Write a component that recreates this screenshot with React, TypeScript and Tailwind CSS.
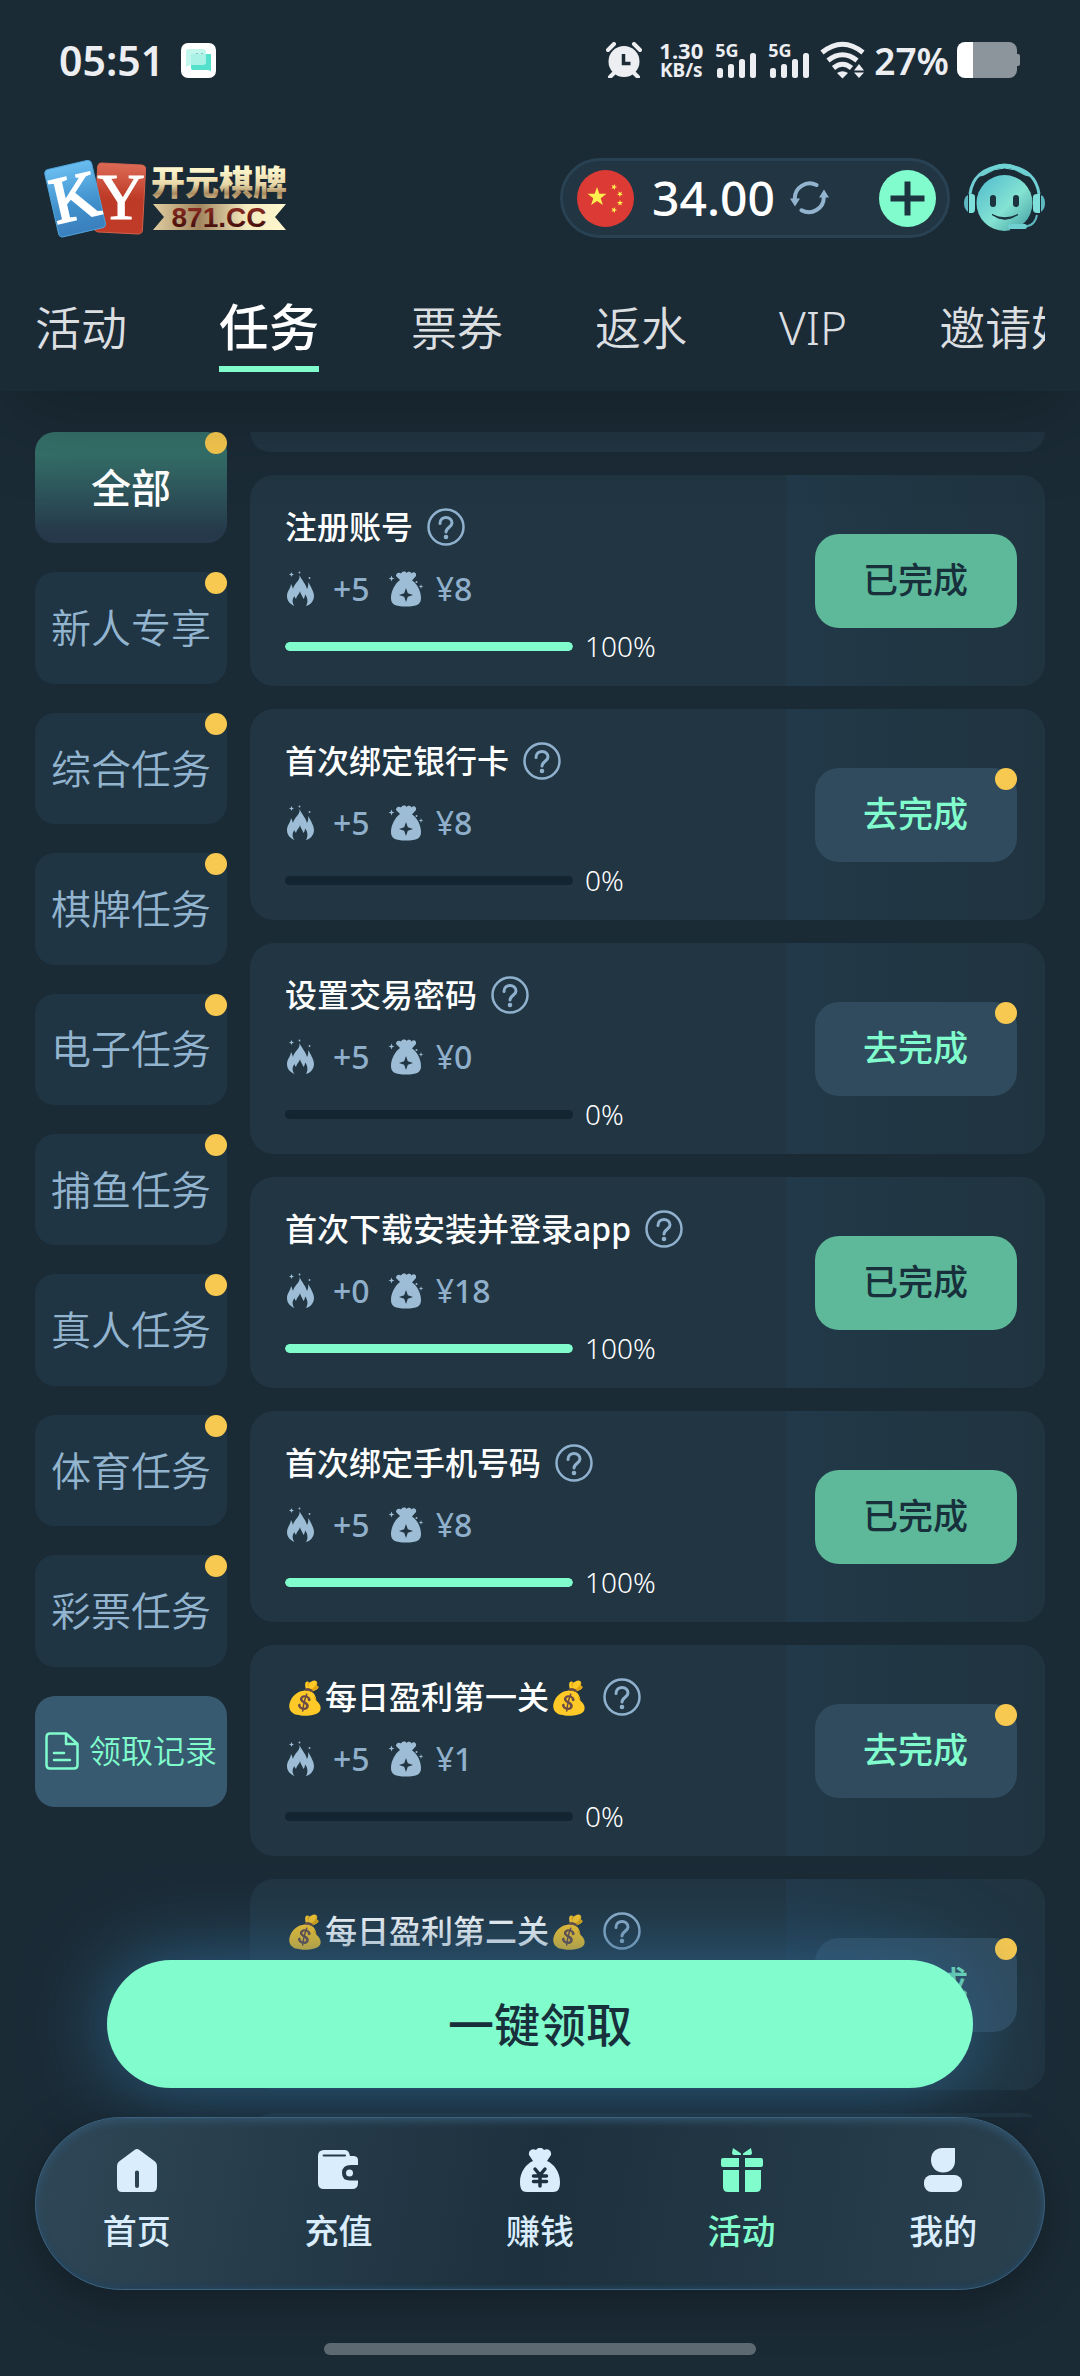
import { useState } from 'react';
import clsx from 'clsx';

interface Task {
  id: number;
  title: string;
  heat: number;
  reward: number;
  progress: number;
}

const tabs = ['活动', '任务', '票券', '返水', 'VIP', '邀请好友'];

const categories = [
  '全部',
  '新人专享',
  '综合任务',
  '棋牌任务',
  '电子任务',
  '捕鱼任务',
  '真人任务',
  '体育任务',
  '彩票任务',
];

const tasks: Task[] = [
  { id: 1, title: '注册账号', heat: 5, reward: 8, progress: 100 },
  { id: 2, title: '首次绑定银行卡', heat: 5, reward: 8, progress: 0 },
  { id: 3, title: '设置交易密码', heat: 5, reward: 0, progress: 0 },
  { id: 4, title: '首次下载安装并登录app', heat: 0, reward: 18, progress: 100 },
  { id: 5, title: '首次绑定手机号码', heat: 5, reward: 8, progress: 100 },
  { id: 6, title: '💰每日盈利第一关💰', heat: 5, reward: 1, progress: 0 },
  { id: 7, title: '💰每日盈利第二关💰', heat: 5, reward: 2, progress: 0 },
];

function StatusBar() {
  return (
    <div className="flex h-[120px] items-center justify-between pl-[59px] pr-[60px] text-[#eceef1]">
      <div className="flex items-center gap-[17px]">
        <span className="text-[41px] font-semibold leading-none">05:51</span>
        <svg width="35" height="35" viewBox="0 0 35 35">
          <rect width="35" height="35" rx="7" fill="#fff" />
          <path d="M10 11h20v17l-3-1H12a2 2 0 0 1-2-2z" fill="#55e0cb" />
          <path d="M7 6h15a3 3 0 0 1 3 3v10a3 3 0 0 1-3 3H9l-4 2V8a2 2 0 0 1 2-2z" fill="#b9f5ea" opacity=".85" />
          <path d="M16 10v1M21 10v1" stroke="#2d9c8d" />
        </svg>
      </div>
      <div className="flex items-center">
        <svg width="36" height="36" viewBox="0 0 36 36" fill="currentColor">
          <path d="M2 8l6-6M34 8l-6-6M8 31l-4 4M28 31l4 4" stroke="currentColor" strokeWidth="4" strokeLinecap="round" />
          <circle cx="18" cy="19.500" r="15.500" />
          <path d="M17.500 12v9.500h7" fill="none" stroke="#1b2b36" strokeWidth="3.500" />
        </svg>
        <div className="ml-4 flex w-[46px] flex-col items-center font-bold">
          <span className="text-[22px] leading-5">1.30</span>
          <span className="text-[19px] leading-5">KB/s</span>
        </div>
        <SignalIcon />
        <SignalIcon />
        <svg className="ml-[10px]" width="46" height="38" viewBox="0 0 46 38" fill="none">
          <g stroke="currentColor" strokeWidth="5">
            <path d="M2 11.500Q22.500-5 43 11.500" />
            <path d="M8 19.500Q22.500 8 37 19.500" />
            <path d="M13.500 27Q22.500 19.500 31.500 27" />
          </g>
          <path d="M17 32Q22.500 28.500 28 32L22.500 37.500z" fill="currentColor" />
          <path d="M39 23l5 6.500H34zM39 37l5-5.500H34z" fill="currentColor" />
        </svg>
        <span className="ml-2 text-[37px] font-semibold leading-none">27%</span>
        <svg className="ml-2" width="63" height="36" viewBox="0 0 63 36">
          <path d="M8 0h44a8 8 0 0 1 8 8v4h1a2 2 0 0 1 2 2v8a2 2 0 0 1-2 2h-1v4a8 8 0 0 1-8 8H8z" fill="#8d959c" />
          <path d="M8 0h8v36H8a8 8 0 0 1-8-8V8a8 8 0 0 1 8-8z" fill="#fff" />
        </svg>
      </div>
    </div>
  );
}

function SignalIcon() {
  return (
    <div className="relative ml-[11px] h-[36px] w-[42px]">
      <span className="absolute left-0 top-0 text-[18px] font-bold leading-4">5G</span>
      <svg width="42" height="36" viewBox="0 0 42 36" fill="currentColor">
        <rect x="2" y="26" width="6" height="10" rx="2.500" />
        <rect x="13" y="22" width="6" height="14" rx="2.500" />
        <rect x="24" y="17" width="6" height="19" rx="2.500" />
        <rect x="35" y="11" width="6" height="25" rx="2.500" />
      </svg>
    </div>
  );
}

function Logo() {
  return (
    <svg width="246" height="80" viewBox="0 0 246 80" role="img" aria-label="开元棋牌 871.CC">
      <defs>
        <linearGradient id="blueCard" x1="0" y1="0" x2="0" y2="1">
          <stop offset="0" stopColor="#69bdf0" />
          <stop offset=".6" stopColor="#4090cc" />
          <stop offset="1" stopColor="#3a7fbd" />
        </linearGradient>
        <linearGradient id="redCard" x1="0" y1="0" x2="0" y2="1">
          <stop offset="0" stopColor="#dc6a55" />
          <stop offset=".5" stopColor="#bd3a26" />
          <stop offset="1" stopColor="#c03c28" />
        </linearGradient>
        <linearGradient id="goldText" x1="0" y1="0" x2="0" y2="1">
          <stop offset=".2" stopColor="#fff8cf" />
          <stop offset=".55" stopColor="#e8d8a8" />
          <stop offset=".75" stopColor="#a98a5f" />
          <stop offset="1" stopColor="#f5e8b8" />
        </linearGradient>
        <linearGradient id="ribbon">
          <stop offset="0" stopColor="#e0cda0" />
          <stop offset=".35" stopColor="#a1855f" />
          <stop offset=".7" stopColor="#f5eabf" />
          <stop offset="1" stopColor="#fff8cf" />
        </linearGradient>
        <linearGradient id="darkRed" x1="0" y1="0" x2="0" y2="1">
          <stop offset=".2" stopColor="#8a2a20" />
          <stop offset=".9" stopColor="#3c0a08" />
        </linearGradient>
      </defs>
      <g transform="rotate(3 76 41)">
        <rect x="52" y="6" width="48" height="69" rx="4" fill="url(#redCard)" stroke="#d2604c" />
      </g>
      <text x="77" y="61" textAnchor="middle" fontSize="66" fill="#fff" stroke="#fff" className="font-['Liberation_Serif']">Y</text>
      <g transform="rotate(-13 32 40)">
        <rect x="7" y="6" width="48" height="69" rx="4" fill="url(#blueCard)" stroke="#4fa3da" />
        <text x="31" y="61" textAnchor="middle" fontSize="66" fill="#fff" stroke="#fff" strokeWidth="2" className="font-['Liberation_Serif']">K</text>
      </g>
      <text x="107" y="37" fontSize="34" fontWeight="900" fill="url(#goldText)">开元棋牌</text>
      <path d="M109 46H242L231 59L242 72H109L120 59z" fill="url(#ribbon)" />
      <text x="175" y="69" textAnchor="middle" fontSize="28" fontWeight="700" fill="url(#darkRed)" className="font-['Liberation_Sans']">871.CC</text>
    </svg>
  );
}

function FlagIcon() {
  const star = 'M0-10L2.300-3.200H9.500L3.700 1.200L5.900 8.100L0 3.900L-5.900 8.100L-3.700 1.200L-9.500-3.200H-2.300z';
  return (
    <svg width="57" height="57" viewBox="0 0 57 57" fill="#fdf04e">
      <circle cx="28.500" cy="28.500" r="28.500" fill="#dc3a35" />
      <path d={star} transform="translate(20 27)" />
      <path d={star} transform="translate(37 17) rotate(20) scale(.32)" />
      <path d={star} transform="translate(43 24) rotate(40) scale(.32)" />
      <path d={star} transform="translate(43 33) scale(.32)" />
      <path d={star} transform="translate(37 40) rotate(20) scale(.32)" />
    </svg>
  );
}

function RefreshIcon() {
  return (
    <svg width="40" height="36" viewBox="0 0 40 36" fill="#93b4cf">
      <g fill="none" stroke="#93b4cf" strokeWidth="4" strokeLinecap="round">
        <path d="M27.500 5A15 15 0 0 0 5.800 19" />
        <path d="M12.500 30.300A15 15 0 0 0 34.800 17" />
      </g>
      <path d="M1 18.500H11L6 26.500zM30 17.500H40L35 9.500z" />
    </svg>
  );
}

function SupportIcon() {
  return (
    <svg width="82" height="70" viewBox="0 0 82 70">
      <defs>
        <linearGradient id="face" x1="0" y1="0" x2="1" y2="1">
          <stop offset="0" stopColor="#4fb9cf" />
          <stop offset=".55" stopColor="#84e3d2" />
          <stop offset="1" stopColor="#3f9aa0" />
        </linearGradient>
      </defs>
      <circle cx="40.500" cy="40" r="28" fill="url(#face)" />
      <path d="M6 31C8 16 18 4 40.500 2.500C63 4 73 16 75 31" fill="none" stroke="#6fcfd4" strokeWidth="3" />
      <path d="M16 13Q40.500-11 65 13L61 12Q40.500-2 20 12z" fill="#70d3d3" stroke="#70d3d3" />
      <path d="M5 31H8Q11 31 11 34V46Q11 50 8 50H5z" fill="#7fdfdb" />
      <path d="M4 32Q0 34 0 40T4 49z" fill="#5fb9c0" />
      <path d="M76 31H73Q69 31 69 34V46Q69 50 73 50H76z" fill="#7fdfdb" />
      <path d="M77 32Q81 34 81 40T77 49z" fill="#5fb9c0" />
      <rect x="26" y="32" width="6" height="12" rx="3" fill="#1b3440" />
      <rect x="49" y="32" width="6" height="12" rx="3" fill="#1b3440" />
      <path d="M28 51.500Q40.500 61 54 51.500Q40.500 58 28 51.500z" fill="#1b3440" stroke="#1b3440" />
      <path d="M73 52Q71 63 62 64H46" fill="none" stroke="#1b2b36" strokeWidth="6" />
      <path d="M73 52Q71 62.500 62 63.500" fill="none" stroke="#5fb9c0" strokeWidth="2" />
      <rect x="44" y="61" width="19" height="5" rx="2.500" fill="#6fcfd0" />
    </svg>
  );
}

function TopBar() {
  return (
    <div className="mt-[38px] flex h-20 items-center justify-between pl-[44px] pr-[34px]">
      <Logo />
      <div className="flex items-center gap-[14px]">
        <div className="flex h-20 w-[390px] items-center rounded-full border-[3px] border-[#294253] bg-[#213542] pl-[14px] pr-[11px]">
          <FlagIcon />
          <span className="ml-[18px] text-[48px] font-medium leading-none text-white">34.00</span>
          <button className="ml-[14px]" aria-label="刷新余额">
            <RefreshIcon />
          </button>
          <button className="ml-auto" aria-label="充值">
            <svg width="57" height="57" viewBox="0 0 57 57">
              <circle cx="28.500" cy="28.500" r="28.500" fill="#80fccd" />
              <path d="M28.500 11.500V45.500M11.500 28.500H45.500" stroke="#1b3440" strokeWidth="6" />
            </svg>
          </button>
        </div>
        <button aria-label="客服">
          <SupportIcon />
        </button>
      </div>
    </div>
  );
}

function QuestionIcon() {
  return (
    <svg width="38" height="38" viewBox="0 0 38 38" fill="none" stroke="#8fb1cd">
      <circle cx="19" cy="19" r="17.500" strokeWidth="2.500" />
      <path d="M13 15.500C13 7.500 25 7.500 25 15C25 19 19 19.500 19 24" strokeWidth="3" strokeLinecap="round" />
      <circle cx="19" cy="29" r="2.300" fill="#8fb1cd" stroke="none" />
    </svg>
  );
}

function FlameIcon() {
  return (
    <svg width="30" height="36" viewBox="0 0 30 36" fill="#9dbcd5">
      <path d="M14.500 4C16 8 21 13 22 18C23.500 16 23 13 23.500 11C25 15 29 20 29 25C29 30 25.500 34 21 35C23.500 31 22.500 26 20 23.500C20 25 19.500 27 18.500 28C17 24 15.500 23 15 20C14.500 23 12 24 11 28C10 27 9.500 26 9.500 25C7 28 7 32 9.500 35C5 33 2 30 2 25C2 20 5.500 18 6 13C7 15 7.500 16 8 18C9 12 15.500 10 14.500 4z" />
      <path d="M6.500 1L7.200 2.800L9 3.500L7.200 4.200L6.500 6L5.800 4.200L4 3.500L5.800 2.800z" />
      <circle cx="14.500" cy="1.500" r=".9" />
      <circle cx="24.500" cy="7" r=".9" />
    </svg>
  );
}

function BagIcon() {
  return (
    <svg width="36" height="36" viewBox="0 0 36 36" fill="#9dbcd5">
      <path d="M12 9L8 5C8 1.500 11.500 1 13 2.500C14.500 0 17.500 0 18.500 2C20 0 23 .5 23.500 2.500C25.500 0 29 2 28 5L24 9.500C29 12.500 33 20 33 27C33 33.500 29 35.500 18 35.500C7 35.500 3 33.500 3 27C3 20 7 12.500 12 9z" />
      <path d="M18 17L19.800 22.200L25 24L19.800 25.800L18 31L16.200 25.800L11 24L16.200 22.200z" fill="#213542" />
      <path d="M3.500 4.500L4.300 6.700L6.500 7.500L4.300 8.300L3.500 10.500L2.700 8.300L.5 7.500L2.700 6.700zM33 13L33.600 14.900L35.500 15.500L33.600 16.100L33 18L32.400 16.100L30.500 15.500L32.400 14.900z" />
      <circle cx="28.500" cy="11" r="1" />
    </svg>
  );
}

function Dot() {
  return <span className="absolute right-0 top-0 size-[22px] rounded-full bg-[#f8c950]" />;
}

function TaskCard({ task }: { task: Task }) {
  const done = task.progress === 100;

  return (
    <li className="flex shrink-0 overflow-hidden rounded-3xl bg-[#213542]">
      <div className="flex flex-1 flex-col gap-6 pb-[26px] pl-[35px] pt-[33px]">
        <div className="flex h-[38px] items-center gap-[14px]">
          <h3 className="text-[32px] font-medium leading-none text-white">{task.title}</h3>
          <button aria-label="任务说明">
            <QuestionIcon />
          </button>
        </div>
        <div className="flex h-[38px] items-center text-[32px] font-medium leading-9 text-[#8fafca]">
          <FlameIcon />
          <span className="ml-[18px]">+{task.heat}</span>
          <span className="ml-[18px]">
            <BagIcon />
          </span>
          <span className="ml-3">
            <span className="font-normal">¥</span>
            {task.reward}
          </span>
        </div>
        <div className="flex h-7 items-center gap-3">
          <div
            className="h-[9px] w-[288px] overflow-hidden rounded-full bg-[#122530]"
            role="progressbar"
            aria-valuenow={task.progress}
            aria-label={task.title}
          >
            <div className="h-full rounded-full bg-[#80fccd]" style={{ width: `${task.progress}%` }} />
          </div>
          <span className="text-[28px] font-light leading-none text-white">{task.progress}%</span>
        </div>
      </div>
      <div className="flex w-[259px] items-center justify-center bg-linear-to-r from-[#22394a] via-[#203643] to-[#203440]">
        <button
          className={clsx(
            'relative h-[94px] w-[202px] rounded-3xl text-[35px] font-medium',
            done ? 'bg-[#5db999] text-[#18303c]' : 'bg-[#304b5e] text-[#80fccd]'
          )}
        >
          {done ? '已完成' : '去完成'}
          {!done && <Dot />}
        </button>
      </div>
    </li>
  );
}

const navItems = [
  {
    label: '首页',
    icon: (
      <path d="M19.500 2Q22 0 24.500 2L40 13.500Q42 15 42 18V38Q42 44 37 44H7Q2 44 2 38V18Q2 15 4 13.500zM20 24V38Q20 40 22 40T24 38V24Q24 22.500 22 22.500T20 24z" fillRule="evenodd" />
    ),
  },
  {
    label: '充值',
    icon: (
      <>
        <path d="M8 2H29Q33 2 34 8H38Q42 8.500 42 12V17H35Q26 17 26 25T35 32.500H42V35Q42 41 36 41H8Q2 41 2 35V8Q2 2 8 2zM8 6.500Q6.500 6.500 6.500 7.500T8 8.500H29Q30 8.500 30 7.500T29 6.500z" fillRule="evenodd" />
        <circle cx="33.500" cy="25" r="3.500" />
      </>
    ),
  },
  {
    label: '赚钱',
    icon: (
      <>
        <path d="M15 13L11 7C10 2 15 0 18 2C20-1 24-1 26 2C29 0 34 2 33 7L29 13C36 16 42 24 42 34C42 41 40 44 35 44H9C4 44 2 41 2 34C2 24 8 16 15 13z" />
        <path d="M17 21L22 27L27 21M22 27V38M15.500 28H28.500M15.500 33.500H28.500" fill="none" stroke="#1e313e" strokeWidth="3.500" strokeLinecap="round" />
      </>
    ),
  },
  {
    label: '活动',
    icon: (
      <>
        <path d="M13 0L21 5.500V7H14Q12 7 12 5zM31 0L23 5.500V7H30Q32 7 32 5z" />
        <path d="M3 10H19V19H3Q1 19 1 17V12Q1 10 3 10zM25 10H41Q43 10 43 12V17Q43 19 41 19H25z" />
        <path d="M3 22H19V44H8Q3 44 3 39zM25 22H41V39Q41 44 36 44H25z" />
      </>
    ),
  },
  {
    label: '我的',
    icon: (
      <>
        <path d="M21.500 0H34V13C34 20 29 24.500 22 24.500S10 19 10 12S14 0 21.500 0z" />
        <rect x="3" y="27" width="38" height="17" rx="7.500" />
      </>
    ),
  },
];

function BottomNav() {
  return (
    <nav className="relative z-10 mx-[35px] flex h-[173px] shrink-0 rounded-full border border-[#3c6280] bg-linear-[100deg,#2f4757,#1d303d_50%,#2a4150] shadow-[0_12px_50px_rgba(0,0,0,0.3),inset_0_3px_8px_#34566f,inset_0_-2px_4px_#1f3f57]">
      {navItems.map((item) => {
        const active = item.label === '活动';
        return (
          <a
            key={item.label}
            href="#"
            className={clsx(
              'flex flex-1 flex-col items-center gap-4 pt-[30px] text-[34px] font-medium leading-[46px]',
              active ? 'text-[#80fccd]' : 'text-[#d9edfd]'
            )}
          >
            <svg width="44" height="44" viewBox="0 0 44 44" fill="currentColor">
              {item.icon}
            </svg>
            {item.label}
          </a>
        );
      })}
    </nav>
  );
}

export default function App() {
  const [activeTab, setActiveTab] = useState('任务');
  const [category, setCategory] = useState('全部');

  return (
    <div className="flex h-screen flex-col overflow-hidden bg-[#1b2b36] font-['Noto_Sans','Noto_Sans_CJK_SC',sans-serif]">
      <header className="relative z-10 shrink-0 bg-[#1b2b36] pb-[19px] shadow-[0_30px_80px_rgba(0,0,0,0.2)]">
        <StatusBar />
        <TopBar />
        <div className="mx-[35px] mt-[50px] flex h-[84px] gap-[92px] overflow-hidden whitespace-nowrap">
          {tabs.map((tab) => (
            <button
              key={tab}
              onClick={() => setActiveTab(tab)}
              className={clsx(
                'shrink-0 border-b-[6px] leading-[76px]',
                tab === activeTab
                  ? 'border-[#80fccd] text-[50px] font-medium text-white'
                  : 'border-transparent text-[46px] font-[350] text-[#dcdfe1]'
              )}
            >
              {tab}
            </button>
          ))}
        </div>
      </header>

      <main className="relative flex min-h-0 flex-1 gap-[23px] px-[35px] pt-[41px]">
        <aside className="flex h-[1375px] w-48 shrink-0 flex-col gap-[29px]">
          {categories.map((name) => (
            <button
              key={name}
              onClick={() => setCategory(name)}
              className={clsx(
                'relative flex-1 rounded-[20px] text-[40px]',
                name === category
                  ? 'bg-linear-to-b from-[#35706a] from-20% to-[#25394a] to-90% font-medium text-white'
                  : 'bg-[#203543] font-[350] text-[#93b4cf]'
              )}
            >
              {name}
              <Dot />
            </button>
          ))}
          <button className="flex flex-1 items-center justify-center gap-[10px] rounded-[20px] bg-[#385a70] text-[32px] font-[350] text-[#80fccd]">
            <svg width="34" height="38" viewBox="0 0 34 38" fill="none" stroke="currentColor" strokeWidth="2.500" strokeLinecap="round" strokeLinejoin="round">
              <path d="M21 1.500H5Q1.500 1.500 1.500 5V33Q1.500 36.500 5 36.500H29Q32.500 36.500 32.500 33V12zM21 1.500V12H32.500M9 21H19M9 28H25" />
            </svg>
            领取记录
          </button>
        </aside>

        <ul className="flex min-h-0 flex-1 flex-col gap-[23px] overflow-hidden">
          <li className="h-[20px] shrink-0 rounded-b-3xl bg-[#213542]" />
          {tasks.map((task) => (
            <TaskCard key={task.id} task={task} />
          ))}
          <li className="h-[211px] shrink-0 rounded-3xl bg-[#213542]" />
        </ul>

        <button className="absolute inset-x-[107px] bottom-[29px] h-32 rounded-full bg-[#80fccd] text-[46px] font-medium text-[#18303c] shadow-[0_0_80px_#2d6188]">
          一键领取
        </button>
      </main>

      <BottomNav />
      <div className="mx-auto mb-[21px] mt-[53px] h-3 w-[432px] shrink-0 rounded-full bg-[#5e6a72]" />
    </div>
  );
}
